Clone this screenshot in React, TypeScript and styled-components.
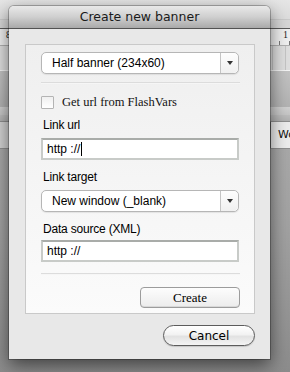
import * as React from "react";
import styled, { createGlobalStyle } from "styled-components";

const GlobalStyle = createGlobalStyle`
    html, body {
        margin: 0;
        padding: 0;
        background: #9a9a9a;
    }
`;

const uiFont = `"DejaVu Sans", "Liberation Sans", sans-serif`;
const flashFont = `"Liberation Sans", Arial, sans-serif`;
const serifFont = `"Liberation Serif", "Times New Roman", serif`;

const Screen = styled.div`
    position: relative;
    width: 290px;
    height: 372px;
    overflow: hidden;
`;

/* application window behind the sheet */
const Backdrop = styled.div`
    display: flex;
    flex-direction: column;
    width: 290px;
    height: 372px;
    background: linear-gradient(#b4b4b4, #a2a2a2 60%, #8c8c8c);
`;

const TopBar = styled.div`
    height: 19px;
    border-bottom: 1px solid #cacaca;
    background: linear-gradient(#e6e6e6, #dcdcdc);
`;

const Strip = styled.div`
    height: 8px;
    border-bottom: 1px solid #5a5a5a;
    background: #d6d6d6;
`;

const Ruler = styled.div`
    position: relative;
    display: flex;
    justify-content: space-between;
    height: 16px;
    padding: 0 2px 0 6px;
    border-bottom: 1px solid #b0b0b0;
    background:
        repeating-linear-gradient(90deg, transparent 0 9px, #777 9px 10px) bottom left / 100% 4px no-repeat,
        #efefef;
    font: 10px ${serifFont};
    line-height: 12px;
    color: #222;
`;

const Grid = styled.div`
    height: 24px;
    border-bottom: 1px solid #f4f4f4;
    background:
        repeating-linear-gradient(90deg, transparent 0 12px, #c4c4c4 12px 13px),
        #dedede;
`;

const GreyBand = styled.div<{ $h: number; $from: string; $to: string }>`
    height: ${p => p.$h}px;
    background: linear-gradient(${p => p.$from}, ${p => p.$to});
`;

const TabBar = styled.div`
    display: flex;
    height: 26px;
    border-top: 1px solid #8e8e8e;
    border-bottom: 1px solid #8e8e8e;
    background: #d2d2d2;
`;

const Tab = styled.div`
    margin-left: 270px;
    padding-left: 7px;
    flex: 1;
    border-left: 1px solid #6e6e6e;
    background: #ececec;
    font: 11px ${uiFont};
    line-height: 26px;
    color: #111;
`;

/* the sheet dialog */
const Dialog = styled.div`
    position: absolute;
    top: 6px;
    left: 9px;
    display: flex;
    flex-direction: column;
    width: 261px;
    height: 353px;
    border-radius: 5px 5px 0 0;
    background: #e8e8e8;
    box-shadow: 0 0 0 1px rgba(0, 0, 0, 0.25), 0 6px 18px rgba(0, 0, 0, 0.55);
    overflow: hidden;
`;

const TitleBar = styled.div`
    height: 22px;
    border-bottom: 1px solid #525252;
    background: linear-gradient(#e9e9e9, #cfcfcf 50%, #a9a9a9);
    text-align: center;
    font: 12.5px ${uiFont};
    line-height: 22px;
    color: #1a1a1a;
`;

const Body = styled.div`
    display: flex;
    flex-direction: column;
    align-items: flex-end;
    padding: 15px 15px 0 16px;
`;

const Panel = styled.div`
    display: flex;
    flex-direction: column;
    align-self: stretch;
    padding: 7px 15px 5px 15px;
    border: 1px solid #c9c9c9;
    background: linear-gradient(#efefef, #fbfbfb);
`;

const SelectBox = styled.div<{ $top?: number }>`
    display: flex;
    height: 20px;
    margin-top: ${p => p.$top || 0}px;
    border: 1px solid #b6b6b6;
    border-radius: 5px;
    background: #fff;
    box-shadow: 0 1px 1px rgba(0, 0, 0, 0.08);
`;

const SelectValue = styled.div`
    flex: 1;
    padding-left: 10px;
    font: 12px ${flashFont};
    line-height: 21px;
    color: #000;
`;

const SelectArrow = styled.div`
    display: flex;
    align-items: center;
    justify-content: center;
    width: 17px;
    border-left: 1px solid #c4c4c4;
    border-radius: 0 5px 5px 0;
    background: linear-gradient(#fdfdfd, #f0f0f0);

    &::after {
        content: "";
        border-top: 4px solid #333;
        border-left: 3px solid transparent;
        border-right: 3px solid transparent;
    }
`;

const Separator = styled.div<{ $top: number }>`
    height: 2px;
    margin: ${p => p.$top}px -1px 0 0;
    background: #dcdcdc;
    border-bottom: 1px solid #f6f6f6;
    box-sizing: border-box;
`;

const CheckRow = styled.label`
    display: flex;
    align-items: center;
    gap: 8px;
    margin-top: 11px;
    font: 12.5px ${serifFont};
    line-height: 14px;
    color: #111;
`;

const Checkbox = styled.span`
    width: 11px;
    height: 11px;
    border: 1px solid #b4b4b4;
    border-radius: 1px;
    background: linear-gradient(#f0f0f0, #ffffff);
`;

const FieldLabel = styled.div<{ $top: number }>`
    margin: ${p => p.$top}px 0 0 2px;
    height: 14px;
    font: 12px ${flashFont};
    line-height: 14px;
    letter-spacing: -0.2px;
    color: #000;
`;

const TextInput = styled.div<{ $top: number }>`
    display: flex;
    align-items: center;
    height: 18px;
    margin-top: ${p => p.$top}px;
    padding-left: 4px;
    border: 2px solid #c8cbc8;
    border-top-color: #a9aca9;
    background: #fff;
    font: 12px ${flashFont};
    color: #000;
`;

const Caret = styled.span`
    display: inline-block;
    width: 1px;
    height: 14px;
    margin-left: 1px;
    background: #000;
`;

const CreateButton = styled.button`
    align-self: flex-end;
    width: 100px;
    height: 21px;
    margin: 12px -1px 0 0;
    padding: 0;
    border: 1px solid #9c9c9c;
    border-radius: 4px;
    background: linear-gradient(#fdfdfd, #ececec);
    box-shadow: inset 0 -1px 0 #d8d8d8;
    font: 13px ${serifFont};
    color: #000;
`;

const CancelButton = styled.button`
    width: 92px;
    height: 21px;
    margin-top: 11px;
    padding: 0;
    border: 1px solid #5c5c5c;
    border-radius: 11px;
    background: linear-gradient(#ffffff, #f2f2f2 45%, #e2e2e2 55%, #f4f4f4);
    box-shadow: 0 1px 1px rgba(0, 0, 0, 0.15);
    font: 12px ${uiFont};
    color: #000;
`;

export default function App() {
    return (
        <Screen>
            <GlobalStyle />
            <Backdrop>
                <TopBar />
                <Strip />
                <Ruler>
                    <span>8</span>
                    <span>1</span>
                </Ruler>
                <Grid />
                <GreyBand $h={36} $from="#c2c2c2" $to="#b2b2b2" />
                <GreyBand $h={8} $from="#d0d0d0" $to="#c4c4c4" />
                <GreyBand $h={6} $from="#bcbcbc" $to="#b0b0b0" />
                <TabBar>
                    <Tab>Wo</Tab>
                </TabBar>
            </Backdrop>

            <Dialog>
                <TitleBar>Create new banner</TitleBar>
                <Body>
                    <Panel>
                        <SelectBox>
                            <SelectValue>Half banner (234x60)</SelectValue>
                            <SelectArrow />
                        </SelectBox>
                        <Separator $top={8} />
                        <CheckRow>
                            <Checkbox />
                            Get url from FlashVars
                        </CheckRow>
                        <FieldLabel $top={9}>Link url</FieldLabel>
                        <TextInput $top={6}>
                            http ://<Caret />
                        </TextInput>
                        <FieldLabel $top={10}>Link target</FieldLabel>
                        <SelectBox $top={6}>
                            <SelectValue>New window (_blank)</SelectValue>
                            <SelectArrow />
                        </SelectBox>
                        <FieldLabel $top={10}>Data source (XML)</FieldLabel>
                        <TextInput $top={4}>http ://</TextInput>
                        <Separator $top={11} />
                        <CreateButton>Create</CreateButton>
                    </Panel>
                    <CancelButton>Cancel</CancelButton>
                </Body>
            </Dialog>
        </Screen>
    );
}
